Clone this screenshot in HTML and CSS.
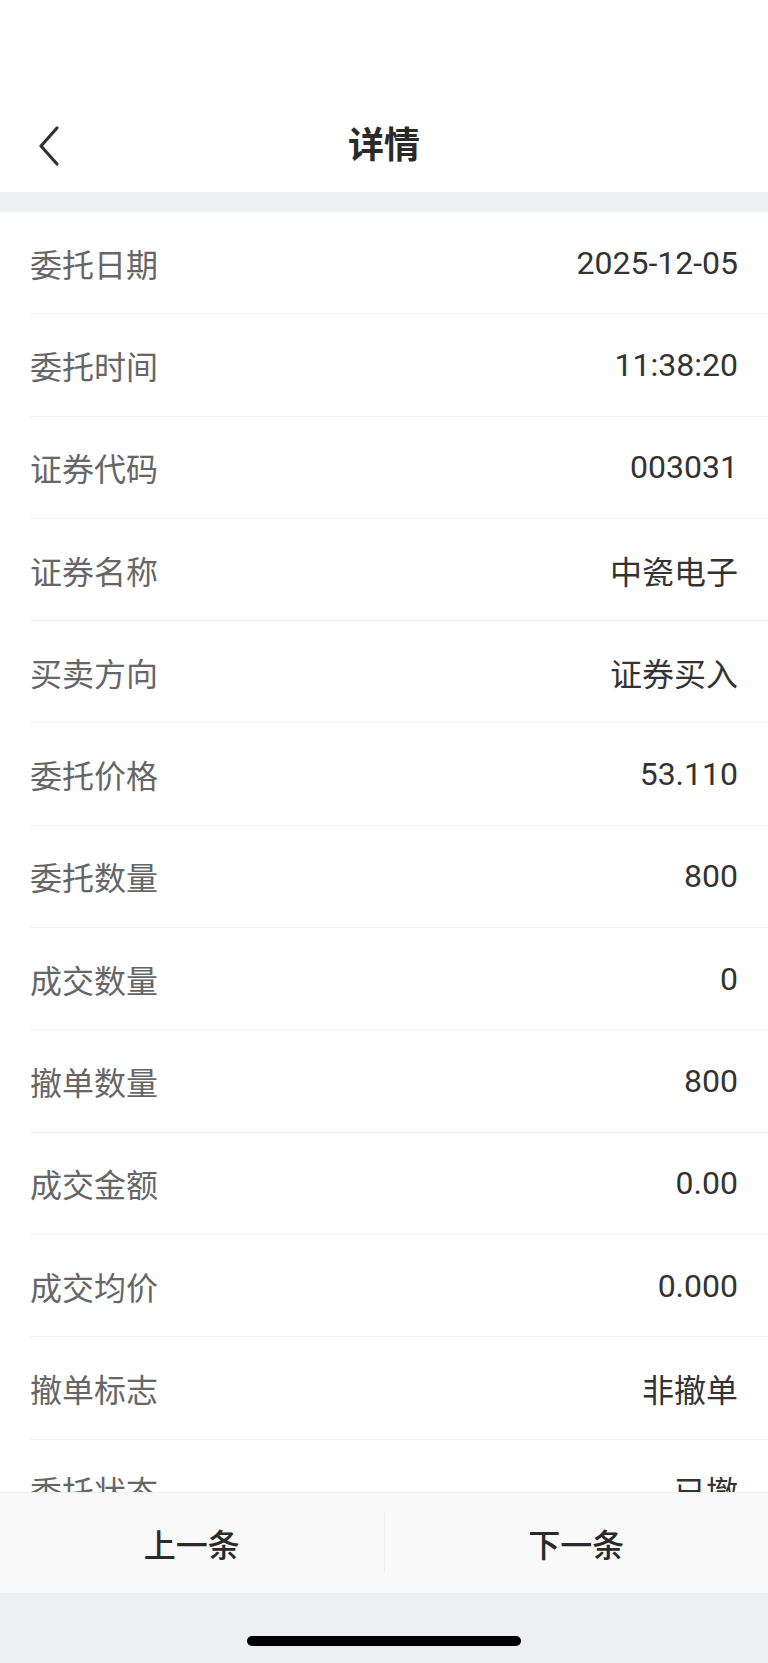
FILE: index.html
```html
<!doctype html>
<html>
  <head>
    <meta charset="utf-8" />
    <title>详情</title>
    <link rel="stylesheet" href="styles.css">
  </head>
  <body>
    <div class="page">
      <div class="status-bar"></div>
      <div class="navbar">
        <a class="back" href="#">
          <svg width="30" height="44" viewBox="0 0 30 44">
            <polyline points="20,3 4,21 20,39" fill="none" stroke="#333" stroke-width="3.2" stroke-linecap="round" stroke-linejoin="round" />
          </svg>
        </a>
        <div class="title">详情</div>
      </div>
      <div class="gap"></div>
      <div class="list">
        <div class="row"><span class="label">委托日期</span><span class="value">2025-12-05</span></div>
        <div class="row"><span class="label">委托时间</span><span class="value">11:38:20</span></div>
        <div class="row"><span class="label">证券代码</span><span class="value">003031</span></div>
        <div class="row"><span class="label">证券名称</span><span class="value">中瓷电子</span></div>
        <div class="row"><span class="label">买卖方向</span><span class="value">证券买入</span></div>
        <div class="row"><span class="label">委托价格</span><span class="value">53.110</span></div>
        <div class="row"><span class="label">委托数量</span><span class="value">800</span></div>
        <div class="row"><span class="label">成交数量</span><span class="value">0</span></div>
        <div class="row"><span class="label">撤单数量</span><span class="value">800</span></div>
        <div class="row"><span class="label">成交金额</span><span class="value">0.00</span></div>
        <div class="row"><span class="label">成交均价</span><span class="value">0.000</span></div>
        <div class="row"><span class="label">撤单标志</span><span class="value">非撤单</span></div>
        <div class="row"><span class="label">委托状态</span><span class="value">已撤</span></div>
      </div>
      <div class="footer">
        <button class="nav-btn">上一条</button>
        <div class="divider"></div>
        <button class="nav-btn">下一条</button>
      </div>
      <div class="home-area">
        <div class="home-indicator"></div>
      </div>
    </div>
  </body>
</html>
```

FILE: styles.css
```css
body {
  margin: 0;
  font-family: "Noto Sans CJK SC", sans-serif;
  background: #fff;
}

.page {
  display: flex;
  flex-direction: column;
  height: 1663px;
  overflow: hidden;
}

.status-bar {
  height: 100px;
  background: #fff;
  flex-shrink: 0;
}

.navbar {
  height: 92px;
  display: flex;
  align-items: center;
  justify-content: center;
  position: relative;
  background: #fff;
  flex-shrink: 0;
}

.back {
  position: absolute;
  left: 37px;
  top: 25px;
  display: block;
  line-height: 0;
}

.title {
  font-size: 36px;
  font-weight: 700;
  color: #2a2a2a;
  margin-top: -8px;
}

.gap {
  height: 20px;
  background: #edf0f3;
  flex-shrink: 0;
}

.list {
  flex: 1;
  overflow: hidden;
  background: #fff;
}

.row {
  box-sizing: border-box;
  height: 102.3px;
  margin-left: 30px;
  padding-right: 30px;
  border-bottom: 1px solid #f2f2f2;
  display: flex;
  align-items: center;
  justify-content: space-between;
}

.label {
  font-size: 32px;
  color: #666;
}

.value {
  font-family: Roboto, "Noto Sans CJK SC", sans-serif;
  font-size: 32px;
  color: #333;
}

.footer {
  height: 100px;
  flex-shrink: 0;
  display: flex;
  align-items: center;
  background: #f9f9f9;
  border-top: 1px solid #eee;
}

.nav-btn {
  flex: 1;
  height: 100%;
  border: none;
  background: none;
  font-family: "Noto Sans CJK SC", sans-serif;
  font-size: 32px;
  font-weight: 500;
  color: #2a2a2a;
  padding: 0;
}

.divider {
  width: 1px;
  height: 60px;
  background: #eee;
}

.home-area {
  height: 70px;
  flex-shrink: 0;
  background: #edf0f3;
  display: flex;
  justify-content: center;
}

.home-indicator {
  width: 274px;
  height: 10px;
  border-radius: 5px;
  background: #000;
  margin-top: 43px;
}
```
